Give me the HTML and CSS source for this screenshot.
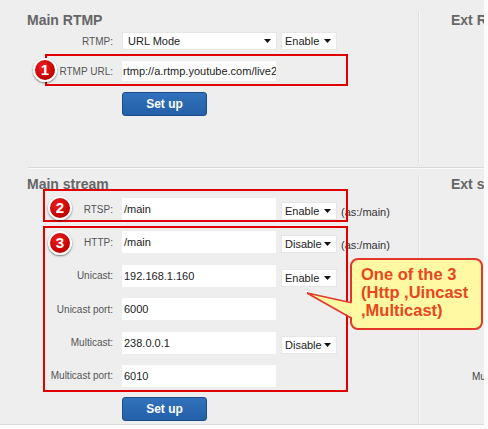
FILE: index.html
```html
<!DOCTYPE html>
<html>
<head>
<meta charset="utf-8">
<link rel="stylesheet" href="styles.css">
</head>
<body>
<div class="page">
  <section class="sec sec-top">
    <div class="col-main">
      <h2 class="title">Main RTMP</h2>
      <div class="row row-sel">
        <span class="label">RTMP:</span>
        <div class="select sel-url"><span>URL Mode</span><svg class="arr" width="7" height="4" viewBox="0 0 7 4"><path d="M0 0H7L3.5 4Z"/></svg></div>
        <div class="select sel-sm"><span>Enable</span><svg class="arr" width="7" height="4" viewBox="0 0 7 4"><path d="M0 0H7L3.5 4Z"/></svg></div>
      </div>
      <div class="row row-url">
        <span class="label">RTMP URL:</span>
        <div class="field field-url">rtmp://a.rtmp.youtube.com/live2</div>
      </div>
      <div class="btn-row"><div class="btn">Set up</div></div>
    </div>
    <div class="col-ext">
      <h2 class="title">Ext RTMP</h2>
    </div>
  </section>
  <div class="hr"></div>
  <section class="sec sec-bottom">
    <div class="col-main">
      <h2 class="title">Main stream</h2>
      <div class="rows">
        <div class="row">
          <span class="label">RTSP:</span>
          <div class="field">/main</div>
          <div class="select sel-sm"><span>Enable</span><svg class="arr" width="7" height="4" viewBox="0 0 7 4"><path d="M0 0H7L3.5 4Z"/></svg></div>
          <span class="hint">(as:/main)</span>
        </div>
        <div class="row">
          <span class="label">HTTP:</span>
          <div class="field">/main</div>
          <div class="select sel-sm"><span>Disable</span><svg class="arr" width="7" height="4" viewBox="0 0 7 4"><path d="M0 0H7L3.5 4Z"/></svg></div>
          <span class="hint">(as:/main)</span>
        </div>
        <div class="row">
          <span class="label">Unicast:</span>
          <div class="field">192.168.1.160</div>
          <div class="select sel-sm"><span>Enable</span><svg class="arr" width="7" height="4" viewBox="0 0 7 4"><path d="M0 0H7L3.5 4Z"/></svg></div>
        </div>
        <div class="row">
          <span class="label">Unicast port:</span>
          <div class="field">6000</div>
        </div>
        <div class="row">
          <span class="label">Multicast:</span>
          <div class="field">238.0.0.1</div>
          <div class="select sel-sm"><span>Disable</span><svg class="arr" width="7" height="4" viewBox="0 0 7 4"><path d="M0 0H7L3.5 4Z"/></svg></div>
        </div>
        <div class="row">
          <span class="label">Multicast port:</span>
          <div class="field">6010</div>
        </div>
      </div>
      <div class="btn-row btn-row-b"><div class="btn">Set up</div></div>
    </div>
    <div class="col-ext">
      <h2 class="title">Ext stream</h2>
      <div class="ext-label">Multicast port:</div>
    </div>
  </section>

  <div class="mark mark-1"></div>
  <div class="mark mark-2"></div>
  <div class="mark mark-3"></div>
  <div class="badge badge-1">1</div>
  <div class="badge badge-2">2</div>
  <div class="badge badge-3">3</div>

  <div class="callout">One of the 3<br>(Http ,Uincast<br>,Multicast)</div>
  <svg class="pointer" width="60" height="40" viewBox="0 0 60 40">
    <polygon points="0,3 46,13 46,28" fill="#fff9a3"/>
    <polyline points="44.5,12.7 0,3 44.5,28.3" fill="none" stroke="#e2382a" stroke-width="1.6" stroke-linejoin="miter"/>
  </svg>
</div>
</body>
</html>
```

FILE: styles.css
```css
html, body {
  margin: 0;
  padding: 0;
}
body {
  background: #fbfbfb;
  width: 488px;
  height: 429px;
  overflow: hidden;
  font-family: "Liberation Sans", Arial, sans-serif;
}
.page {
  position: relative;
  width: 484px;
  height: 424px;
  background: #eeeeee;
  border-bottom: 1px solid #dddddd;
  overflow: hidden;
}
.sec {
  display: flex;
}
.sec-top {
  height: 167px;
}
.col-main {
  width: 419px;
  box-sizing: border-box;
  padding-left: 27px;
  border-right: 1px solid #dfdfdf;
  box-shadow: 1px 0 0 #f8f8f8;
  display: flex;
  flex-direction: column;
}
.sec-top .col-main {
  margin-top: 12px;
  height: 151px;
}
.sec-bottom .col-main {
  margin-top: 7px;
  padding-top: 1px;
  height: 249px;
}
.col-ext {
  flex: 1;
  padding-left: 32px;
  white-space: nowrap;
  overflow: hidden;
}
.sec-top .col-ext {
  padding-top: 12px;
}
.sec-bottom .col-ext {
  padding-top: 8px;
}
.title {
  margin: 0;
  font-size: 14px;
  line-height: 16px;
  font-weight: bold;
  color: #666666;
  white-space: nowrap;
}
.hr {
  margin-left: 28px;
  height: 1px;
  background: #d9d9d9;
  box-shadow: 0 1px 0 #fafafa;
}
.row {
  display: flex;
  align-items: flex-end;
  height: 22px;
}
.row-sel {
  margin-top: 4px;
  height: 18px;
}
.row-url {
  margin-top: 11px;
  height: 20px;
}
.label {
  width: 86px;
  margin-right: 9px;
  text-align: right;
  font-size: 10px;
  color: #555555;
  align-self: center;
  white-space: nowrap;
}
.field {
  width: 154px;
  height: 22px;
  box-sizing: border-box;
  background: #ffffff;
  padding-left: 2px;
  font-size: 11px;
  line-height: 22px;
  color: #222222;
  white-space: nowrap;
  overflow: hidden;
}
.field-url {
  height: 20px;
  line-height: 20px;
  padding-left: 1px;
}
.select {
  position: relative;
  height: 18px;
  box-sizing: border-box;
  background: #ffffff;
  border: 1px solid #e6e6e6;
  font-size: 11px;
  line-height: 16px;
  color: #222222;
  padding-left: 3px;
  white-space: nowrap;
}
.sel-url {
  width: 155px;
  padding-left: 5px;
}
.sel-sm {
  width: 56px;
  margin-left: 5px;
}
.sel-url + .sel-sm {
  margin-left: 4px;
}
.arr {
  position: absolute;
  right: 5px;
  top: 6px;
  fill: #111111;
}
.hint {
  margin-left: 4px;
  font-size: 11px;
  color: #333333;
  line-height: 14px;
  margin-bottom: 1px;
  white-space: nowrap;
}
.rows {
  margin-top: 6px;
  display: flex;
  flex-direction: column;
  gap: 11.4px;
}
.btn-row {
  margin-top: 11px;
  padding-left: 95px;
}
.btn-row-b {
  margin-top: 10px;
}
.btn {
  width: 85px;
  height: 24px;
  box-sizing: border-box;
  border: 1px solid #1d4d88;
  border-radius: 3px;
  background: linear-gradient(#3272bc, #2360a8);
  color: #ffffff;
  font-size: 12px;
  font-weight: bold;
  line-height: 22px;
  text-align: center;
}
.ext-label {
  margin-top: 178px;
  padding-left: 21px;
  font-size: 10px;
  line-height: 14px;
  color: #444444;
}

/* annotations over the screenshot */
.mark {
  position: absolute;
  border: 2px solid #e00000;
  box-sizing: border-box;
}
.mark-1 {
  left: 45px;
  top: 54px;
  width: 303px;
  height: 32px;
}
.mark-2 {
  left: 43px;
  top: 189px;
  width: 305px;
  height: 33px;
}
.mark-3 {
  left: 43px;
  top: 226px;
  width: 305px;
  height: 166px;
}
.badge {
  position: absolute;
  width: 24px;
  height: 24px;
  box-sizing: border-box;
  border-radius: 50%;
  border: 2px solid #ffffff;
  background: radial-gradient(circle at 40% 35%, #f02020, #c00000 70%, #a00000);
  box-shadow: 0 1px 2px rgba(0, 0, 0, 0.55);
  color: #ffffff;
  font-size: 15px;
  font-weight: bold;
  line-height: 20px;
  text-align: center;
}
.badge-1 {
  left: 33px;
  top: 58px;
}
.badge-2 {
  left: 48px;
  top: 196px;
}
.badge-3 {
  left: 48px;
  top: 231px;
}
.callout {
  position: absolute;
  left: 350px;
  top: 258px;
  width: 133px;
  height: 72px;
  box-sizing: border-box;
  border: 2px solid #e2382a;
  border-radius: 8px;
  background: #fff9a3;
  padding: 5px 0 0 9px;
  color: #e8461c;
  font-size: 16.5px;
  font-weight: bold;
  line-height: 18px;
  white-space: nowrap;
}
.pointer {
  position: absolute;
  left: 307px;
  top: 290px;
}
```
